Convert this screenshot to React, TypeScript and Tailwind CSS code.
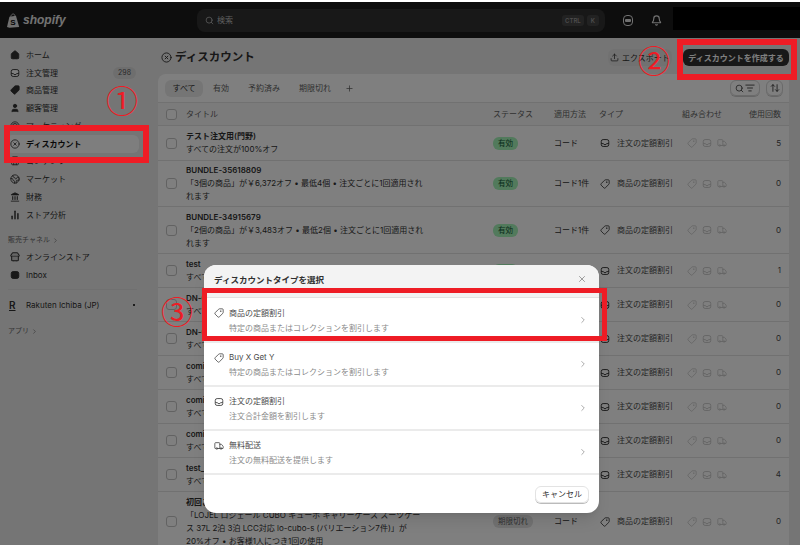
import { ArrowUpDown, Bell, ChartNoAxesColumn, ChevronRight, CircleX, Earth, House, Landmark, ListFilter, Plus, Search, Store, Tag, Target, Truck, Upload, User, X } from "lucide-react";

type Row = {
  title: string;
  lines: string[];
  status: string;
  method: string;
  kind: "order" | "product";
  count: number;
  height: string;
};

const ORDER = "注文の定額割引";
const PRODUCT = "商品の定額割引";

const rows: Row[] = [
  { title: "テスト注文用(門野)", lines: ["すべての注文が100%オフ"], status: "有効", method: "コード", kind: "order", count: 5, height: "h-[35px]" },
  { title: "BUNDLE-35618809", lines: ["「3個の商品」が￥6,372オフ • 最低4個 • 注文ごとに1回適用され", "れます"], status: "有効", method: "コード1件", kind: "product", count: 0, height: "h-[46px]" },
  { title: "BUNDLE-34915679", lines: ["「2個の商品」が￥3,483オフ • 最低2個 • 注文ごとに1回適用され", "れます"], status: "有効", method: "コード1件", kind: "product", count: 0, height: "h-[47px]" },
  { title: "test", lines: ["すべての注文が10%オフ"], status: "有効", method: "コード", kind: "order", count: 1, height: "h-[34px]" },
  { title: "DN-0001", lines: ["すべての注文が10%オフ"], status: "有効", method: "コード", kind: "order", count: 0, height: "h-[34px]" },
  { title: "DN-0002", lines: ["すべての注文が10%オフ"], status: "有効", method: "コード", kind: "order", count: 0, height: "h-[34px]" },
  { title: "comic", lines: ["すべての注文が10%オフ"], status: "有効", method: "コード", kind: "order", count: 0, height: "h-[34px]" },
  { title: "comic", lines: ["すべての注文が10%オフ"], status: "有効", method: "コード", kind: "order", count: 0, height: "h-[34px]" },
  { title: "comic", lines: ["すべての注文が10%オフ"], status: "有効", method: "コード", kind: "order", count: 0, height: "h-[34px]" },
  { title: "test_", lines: ["すべての注文が10%オフ"], status: "有効", method: "コード", kind: "order", count: 4, height: "h-[34px]" },
  { title: "初回ご注文", lines: ["「LOJEL ロジェール CUBO キューボ キャリーケース スーツケー", "ス 37L 2泊 3泊 LCC対応 lo-cubo-s (バリエーション7件)」が", "20%オフ • お客様1人につき1回の使用"], status: "期限切れ", method: "コード", kind: "product", count: 0, height: "h-[60px]" },
];

const choices = [
  { icon: "product", title: "商品の定額割引", sub: "特定の商品またはコレクションを割引します", height: "h-[45px]" },
  { icon: "product", title: "Buy X Get Y", sub: "特定の商品またはコレクションを割引します", height: "h-[44px]" },
  { icon: "order", title: "注文の定額割引", sub: "注文合計金額を割引します", height: "h-[44px]" },
  { icon: "truck", title: "無料配送", sub: "注文の無料配送を提供します", height: "h-[44px]" },
];

function OrderIcon({ className }: { className: string }) {
  return (
    <svg viewBox="0 0 16 16" fill="none" stroke="currentColor" strokeWidth="1.5" className={className}>
      <rect x="2" y="2.5" width="12" height="11" rx="3" />
      <path d="M2 9h3.5l1 1.5h3l1-1.5H14" />
    </svg>
  );
}

function ProductIcon({ className }: { className: string }) {
  return <Tag className={`${className} -scale-x-100`} strokeWidth={2} />;
}

function KindIcon({ kind, className }: { kind: string; className: string }) {
  if (kind === "order") return <OrderIcon className={className} />;
  if (kind === "truck") return <Truck className={className} strokeWidth={2} />;
  return <ProductIcon className={className} />;
}

function ShopifyLogo() {
  return (
    <div className="flex items-center gap-[3px]">
      <svg viewBox="0 0 16 18" className="h-[15px] w-[13px]">
        <path d="M3 4.5 11 3l4 14-12 1-3-1z" fill="#e3e3e3" />
        <path d="M4.5 4.5C5 2 6.5.8 8 1c1.4.2 1.8 1.6 1.8 3" fill="none" stroke="#e3e3e3" strokeWidth="1" />
        <text x="4" y="14" fontSize="10" fontWeight="700" fill="#0c0c0c" fontFamily="Liberation Sans">S</text>
      </svg>
      <span className="font-['Liberation_Sans'] text-[12px] font-bold italic text-[#e6e6e6]">shopify</span>
    </div>
  );
}

function TopBar() {
  return (
    <header className="flex h-[36px] items-center bg-[#1a1a1a] pl-[7px]">
      <div className="w-[190px]">
        <ShopifyLogo />
      </div>
      <div className="flex h-[23px] w-[408px] items-center rounded-lg bg-[#303030] pl-[8px] pr-[6px]">
        <Search className="h-[9px] w-[9px] text-[#bdbdbd]" />
        <span className="ml-[3px] text-[8px] text-[#bdbdbd]">検索</span>
        <span className="ml-auto rounded-[3px] bg-[#444] px-[3px] py-[1px] text-[6px] font-semibold leading-[9px] text-[#999]">CTRL</span>
        <span className="ml-[3px] rounded-[3px] bg-[#444] px-[4px] py-[1px] text-[6px] font-semibold leading-[9px] text-[#999]">K</span>
      </div>
      <div className="ml-[18px] flex h-[11px] w-[10px] items-center justify-center rounded-[4px] border border-[#e3e3e3]">
        <span className="h-[3px] w-[6px] rounded-[1px] bg-[#e3e3e3]" />
      </div>
      <Bell className="ml-[18px] h-[11px] w-[11px] text-[#e3e3e3]" strokeWidth={2.5} />
      <div className="ml-[11px] mt-[5px] h-[23px] flex-1 self-start bg-black" />
    </header>
  );
}

function NavItem({ icon, label, active, badge }: { icon: React.ReactNode; label: string; active?: boolean; badge?: string }) {
  return (
    <div className={`mx-[6px] flex h-[17.75px] items-center rounded-md pl-[4px] pr-[3px] text-[8px] ${active ? "bg-[#fdfdfd] font-bold text-[#111]" : "text-[#303030]"}`}>
      <span className="flex w-[16px] shrink-0 items-center text-[#303030]">{icon}</span>
      <span>{label}</span>
      {badge && <span className="ml-auto rounded-md bg-[#dcdcdc] px-[5px] text-[7px] leading-[12px] text-[#555]">{badge}</span>}
    </div>
  );
}

function Sidebar() {
  const ic = "h-[10px] w-[10px]";
  return (
    <aside className="flex w-[158px] shrink-0 flex-col pt-[8px]">
      <div className="w-[145px]">
        <NavItem icon={<House className={`${ic} fill-current`} />} label="ホーム" />
        <NavItem icon={<OrderIcon className={`${ic} fill-white`} />} label="注文管理" badge="298" />
        <NavItem icon={<Tag className={`${ic} -scale-x-100 fill-current`} />} label="商品管理" />
        <NavItem icon={<User className={`${ic} fill-current`} />} label="顧客管理" />
        <NavItem icon={<Target className={ic} />} label="マーケティング" />
        <NavItem icon={<CircleX className={ic} />} label="ディスカウント" active />
        <NavItem icon={<Store className={ic} />} label="コンテンツ" />
        <NavItem icon={<Earth className={ic} />} label="マーケット" />
        <NavItem icon={<Landmark className={`${ic} fill-current`} />} label="財務" />
        <NavItem icon={<ChartNoAxesColumn className={ic} strokeWidth={3.5} />} label="ストア分析" />
        <div className="mt-[8px] flex h-[17px] items-center pl-[8px] text-[7px] text-[#666]">
          販売チャネル
          <ChevronRight className="ml-[2px] h-[7px] w-[7px]" />
        </div>
        <NavItem icon={<Store className={`${ic} fill-[#ccc]`} strokeWidth={2.5} />} label="オンラインストア" />
        <NavItem icon={<OrderIcon className={`${ic} fill-current`} />} label="Inbox" />
        <div className="mx-[8px] mt-[5px] border-t border-[#e0e0e0]" />
        <div className="mx-[6px] mt-[6px] flex h-[18px] items-center pl-[3px] text-[8px] text-[#303030]">
          <span className="w-[17px] text-[10px] font-semibold underline">R</span>
          <span>Rakuten Ichiba (JP)</span>
          <span className="ml-auto mr-[4px] h-[2px] w-[2px] rounded-full bg-black" />
        </div>
        <div className="mt-[9px] flex h-[17px] items-center pl-[8px] text-[7px] text-[#666]">
          アプリ
          <ChevronRight className="ml-[2px] h-[7px] w-[7px]" />
        </div>
      </div>
    </aside>
  );
}

const gridCols = "grid grid-cols-[20px_307px_61px_45px_83px_1fr_auto] items-center pl-[8px] pr-[8px]";

function DiscountTable() {
  return (
    <div className="shrink-0 rounded-t-lg bg-white">
      <div className="flex h-[29px] items-center border-b border-[#e3e3e3] pl-[7px] pr-[6px] text-[8px] text-[#616161]">
        <span className="flex h-[17px] w-[38px] items-center justify-center rounded-md bg-[#ebebeb] text-[#303030]">すべて</span>
        <span className="ml-[10px]">有効</span>
        <span className="ml-[19px]">予約済み</span>
        <span className="ml-[19px]">期限切れ</span>
        <Plus className="ml-[14px] h-[9px] w-[9px]" />
        <div className="ml-auto flex h-[16px] w-[30px] items-center justify-center gap-[1px] rounded-md border border-[#d4d4d4] shadow-[0_1px_0_#ccc]">
          <Search className="h-[9px] w-[9px] text-[#303030]" />
          <ListFilter className="h-[10px] w-[10px] text-[#303030]" />
        </div>
        <div className="ml-[6px] flex h-[16px] w-[17px] items-center justify-center rounded-md border border-[#d4d4d4] shadow-[0_1px_0_#ccc]">
          <ArrowUpDown className="h-[10px] w-[10px] text-[#303030]" />
        </div>
      </div>
      <div className={`${gridCols} h-[23px] border-b border-[#e3e3e3] bg-[#f7f7f7] text-[8px] text-[#616161]`}>
        <span className="h-[11px] w-[11px] rounded-[3px] border border-[#c4c4c4] bg-white" />
        <span>タイトル</span>
        <span>ステータス</span>
        <span>適用方法</span>
        <span>タイプ</span>
        <span>組み合わせ</span>
        <span>使用回数</span>
      </div>
      {rows.map((row, i) => (
        <div key={i} className={`${gridCols} ${row.height} border-b border-[#e3e3e3] text-[8px] leading-[13px] text-[#303030]`}>
          <span className="h-[11px] w-[11px] rounded-[3px] border border-[#c4c4c4] bg-white" />
          <div>
            <div className="font-semibold text-[#303030]">{row.title}</div>
            {row.lines.map((line) => (
              <div key={line}>{line}</div>
            ))}
          </div>
          <div>
            <span className={`inline-block rounded-md px-[5px] text-[7.5px] leading-[13px] ${row.status === "有効" ? "bg-[#a4f4b8] text-[#0c5132]" : "bg-[#e3e3e3] text-[#616161]"}`}>
              {row.status}
            </span>
          </div>
          <span>{row.method}</span>
          <div className="flex items-center gap-[7px] pl-[1px]">
            <KindIcon kind={row.kind} className="h-[10px] w-[10px] text-[#303030]" />
            <span className="whitespace-nowrap text-[#4a4a4a]">{row.kind === "order" ? ORDER : PRODUCT}</span>
          </div>
          <div className="flex items-center gap-[5px] pl-[5px] text-[#c9c9c9]">
            <ProductIcon className="h-[10px] w-[10px]" />
            <OrderIcon className="h-[10px] w-[10px]" />
            <Truck className="h-[10px] w-[10px]" strokeWidth={2} />
          </div>
          <span className="text-right text-[#4a4a4a]">{row.count}</span>
        </div>
      ))}
    </div>
  );
}

function Main() {
  return (
    <main className="flex min-w-0 flex-1 flex-col pr-[11px]">
      <div className="flex h-[36px] shrink-0 items-center pl-[3px] pt-[3px]">
        <CircleX className="h-[11px] w-[11px] text-[#303030]" />
        <h1 className="ml-[3px] text-[11.5px] font-bold text-[#303030]">ディスカウント</h1>
        <button type="button" className="ml-auto flex h-[17px] w-[64px] items-center justify-center gap-[3px] rounded-md bg-[#e3e3e3] text-[8px] text-[#303030]">
          <Upload className="h-[9px] w-[9px]" />
          エクスポート
        </button>
        <button type="button" className="ml-[11px] h-[17px] w-[106px] rounded-md bg-[#303030] text-[8px] font-semibold text-white">ディスカウントを作成する</button>
      </div>
      <DiscountTable />
    </main>
  );
}

function ChoiceModal() {
  return (
    <div className="absolute left-[204px] top-[265px] flex h-[248px] w-[395px] flex-col overflow-hidden rounded-xl bg-white shadow-lg">
      <div className="flex h-[33px] shrink-0 items-start justify-between border-b border-[#e3e3e3] bg-[#f3f3f3] pl-[10px] pr-[12px] pt-[9px]">
        <h2 className="text-[8.5px] font-bold leading-[13px] text-[#303030]">ディスカウントタイプを選択</h2>
        <X className="h-[10px] w-[10px] text-[#8a8a8a]" />
      </div>
      {choices.map((c) => (
        <div key={c.title} className={`flex ${c.height} shrink-0 items-center border-b-2 border-[#ebebeb] pl-[10px] pr-[11px]`}>
          <div className="flex-1 pt-[2px]">
            <div className="flex items-center text-[8px] leading-[13px] text-[#4a4a4a]">
              <span className="w-[15px]">
                <KindIcon kind={c.icon} className="h-[10px] w-[10px] text-[#4a4a4a]" />
              </span>
              {c.title}
            </div>
            <div className="mt-[2px] pl-[15px] text-[8px] leading-[13px] text-[#8a8a8a]">{c.sub}</div>
          </div>
          <ChevronRight className="h-[10px] w-[10px] text-[#9a9a9a]" />
        </div>
      ))}
      <div className="flex flex-1 items-center justify-end pr-[10px]">
        <button type="button" className="h-[17px] w-[54px] rounded-md border border-[#e3e3e3] text-[8px] text-[#303030] shadow-[0_1px_0_#bbb]">キャンセル</button>
      </div>
    </div>
  );
}

function Annotations() {
  const circled = "absolute font-['Noto_Sans_CJK_JP'] text-[32px] leading-[32px] text-[#ee1c25]";
  return (
    <>
      <div className="absolute left-[4px] top-[125px] h-[38px] w-[145px] border-[6px] border-[#ee1c25]" />
      <div className="absolute left-[677px] top-[39px] h-[41px] w-[120px] border-[6px] border-[#ee1c25]" />
      <div className="absolute left-[202px] top-[288px] h-[53px] w-[405px] border-[5px] border-[#ee1c25]" />
      <span className={`${circled} left-[106px] top-[83px]`}>①</span>
      <span className={`${circled} left-[638px] top-[43px]`}>②</span>
      <span className={`${circled} left-[161px] top-[294px]`}>③</span>
    </>
  );
}

export default function App() {
  return (
    <div className="relative h-[545px] w-[800px] overflow-hidden bg-white font-['Inter','Noto_Sans_CJK_JP',sans-serif]">
      <div className="h-[2px] bg-white" />
      <TopBar />
      <div className="flex h-[507px] overflow-hidden bg-[#ebebeb]">
        <Sidebar />
        <Main />
      </div>
      <div className="absolute inset-x-0 bottom-0 top-[2px] bg-black/50" />
      <ChoiceModal />
      <Annotations />
    </div>
  );
}
